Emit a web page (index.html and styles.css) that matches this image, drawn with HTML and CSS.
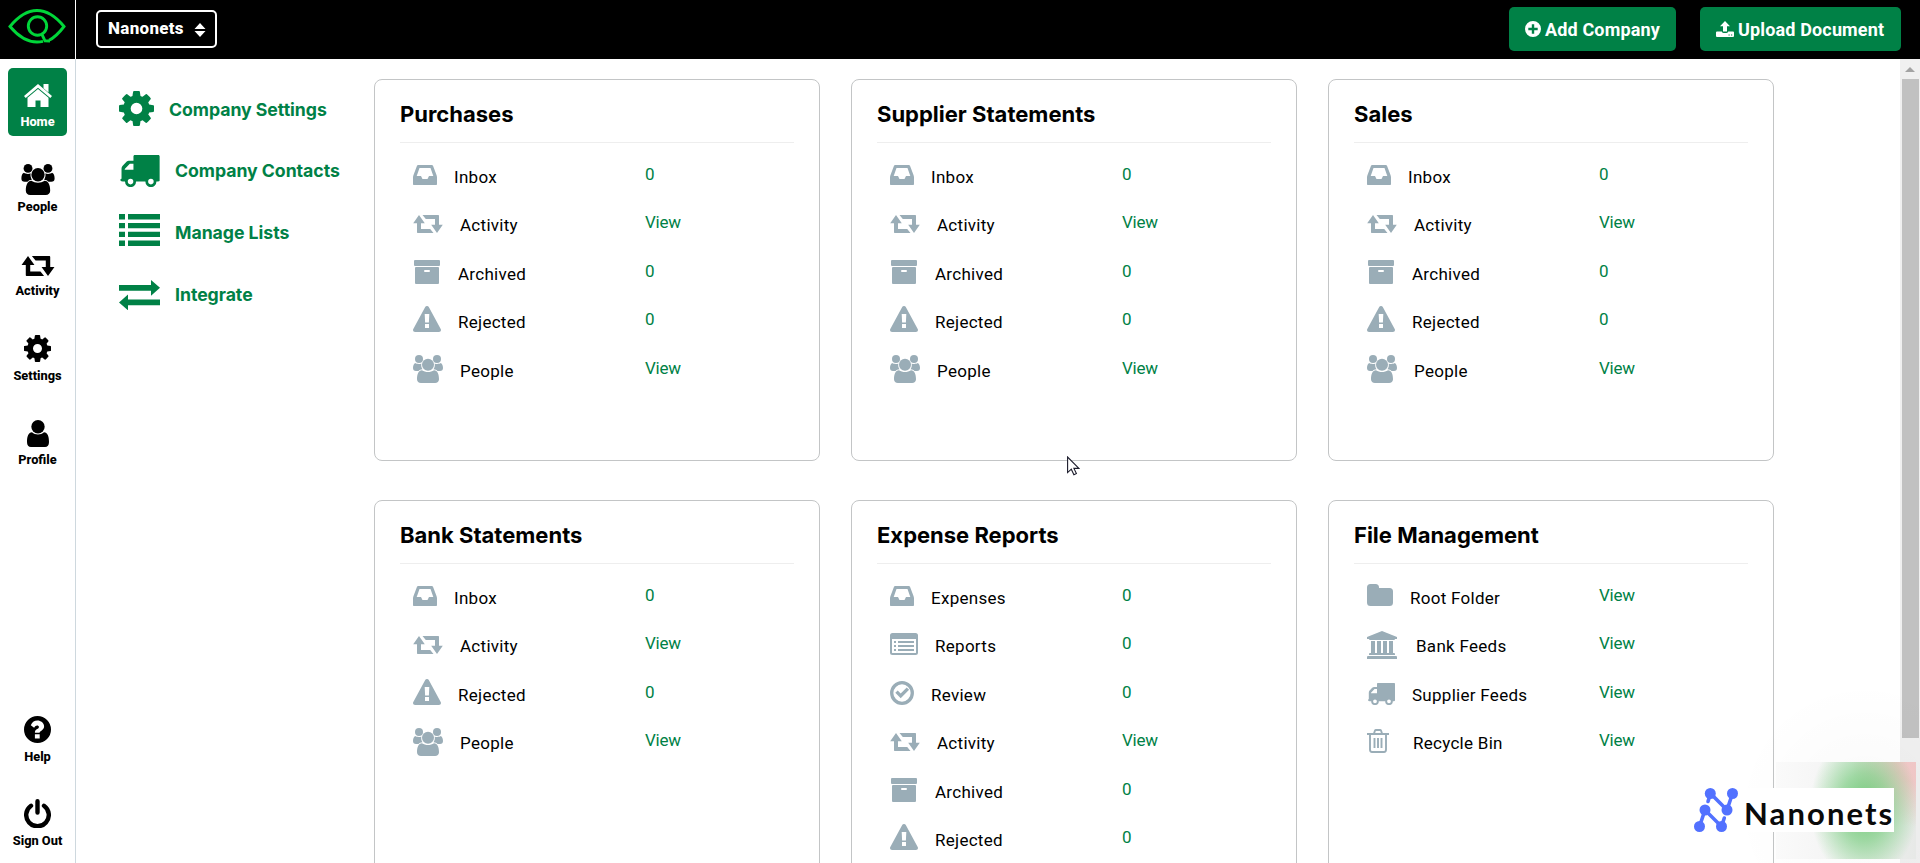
FILE: index.html
```html
<!DOCTYPE html>
<html lang="en">
<head>
<meta charset="utf-8">
<title>Nanonets</title>
<link rel="stylesheet" href="styles.css">
</head>
<body>
<svg class="defs" aria-hidden="true">
  <symbol id="home" viewBox="0 0 28 23"><path d="M14 0 28 12l-1.700 2.100L14 3.800 1.700 14.100 0 12zM19.500 0h5v8.500l-5-4.200zM14 5l10.500 8.800V23h-8v-6.500h-5V23h-8v-9.200z"/></symbol>
  <symbol id="people" viewBox="0 0 30 28"><circle cx="6" cy="4" r="4"/><circle cx="24" cy="4" r="4"/><circle cx="15" cy="9.700" r="6"/><path d="M2.300 8C3.500 9 7 9.300 8.300 8.400 8 11 8.400 12.500 9.500 14.300 7.500 14.500 6.500 15 5.500 16H3C1 16 0 15 0 13c0-2 .7-4.600 2.300-5zM27.700 8C26.500 9 23 9.300 21.700 8.400c.3 2.600-.1 4.100-1.200 5.900 2 .2 3 .7 4 1.700H27c2 0 3-1 3-3 0-2-.7-4.600-2.300-5zM9 15.200c3.500 2.400 8.500 2.400 12 0 3.500 0 5 4 5 9 0 2.300-1.600 3.800-4 3.800H8c-2.400 0-4-1.500-4-3.800 0-5 1.500-9 5-9z"/></symbol>
  <symbol id="activity" viewBox="0 0 30 18"><path d="M6 0l5.800 8.200H8V14h9.200l3.300 4H5c-.7 0-1-.4-1-1V8.200H.2zM24 18l-5.800-8.200H22V4h-9.200L9.500 0H25c.7 0 1 .4 1 1v8.800h3.800z"/></symbol>
  <symbol id="cog" viewBox="128 128 1536 1536"><path d="M1152 896q0-106-75-181t-181-75-181 75-75 181 75 181 181 75 181-75 75-181zm512-109v222q0 12-8 23t-20 13l-185 28q-19 54-39 91 35 50 107 138 10 12 10 25t-9 23q-27 37-99 108t-94 71q-12 0-26-9l-138-108q-44 23-91 38-16 136-29 186-7 28-36 28h-222q-14 0-24.500-8.500t-11.500-21.500l-28-184q-49-16-90-37l-141 107q-10 9-25 9-14 0-25-11-126-114-165-168-7-10-7-23 0-12 8-23 15-21 51-66.500t54-70.500q-27-50-41-99l-183-27q-13-2-21-12.500t-8-23.500v-222q0-12 8-23t19-13l186-28q14-46 39-92-40-57-107-138-10-12-10-24 0-10 9-23 26-36 98.500-107.500t94.500-71.500q13 0 26 10l138 107q44-23 91-38 16-136 29-186 7-28 36-28h222q14 0 24.500 8.500t11.500 21.500l28 184q49 16 90 37l142-107q9-9 24-9 13 0 25 10 129 119 165 170 7 8 7 22 0 12-8 23-15 21-51 66.500t-54 70.500q26 50 41 98l183 28q13 2 21 12.500t8 23.500z"/></symbol>
  <symbol id="user" viewBox="0 0 22 27"><circle cx="11" cy="6.700" r="6.700"/><path d="M5 12.300c3.300 3 8.700 3 12 0 3.500.2 5 4 5 9.700 0 3.300-1.500 5-4 5H4c-2.500 0-4-1.700-4-5 0-5.700 1.500-9.500 5-9.700z"/></symbol>
  <symbol id="help" viewBox="0 0 27 27"><path fill-rule="evenodd" d="M13.500 0a13.500 13.500 0 1 1 0 27 13.500 13.500 0 0 1 0-27zM6.800 9.200l3.300 2.500c1-1.400 1.900-2.200 3-2.200 1 0 1.800.6 1.800 1.400 0 1-.7 1.500-1.800 2.100-1.600.9-2.200 2-2.200 3.700h4.700c0-.8.6-1.200 1.800-2 1.600-1 2.700-2.300 2.700-4.400 0-3.400-3.300-5.800-6.700-5.800-3 0-5 1.400-6.600 4.700zM10.900 18.200v4.300h4.800v-4.300z"/></symbol>
  <symbol id="power" viewBox="0 0 27 29"><path d="M7 6.700A11.300 11.300 0 1 0 20 6.700M13.500 2.200V13.500" fill="none" stroke="currentColor" stroke-width="4.400" stroke-linecap="round"/></symbol>
  <symbol id="truck" viewBox="0 0 27 22"><path fill-rule="evenodd" d="M10 0h16c.6 0 1 .4 1 1v16.300c0 .7-.5 1-2.200 1a3.800 3.800 0 0 1-7.600 0h-6.400a3.800 3.800 0 0 1-7.600 0C.8 18.300 0 18 0 17c0-.4.3-.6.8-.7v-6.500c0-1 .2-1.800.8-2.400l2.600-2.700C4.700 4.200 5.500 4 6.200 4H9V1c0-.6.4-1 1-1zM9 6H6.500L3 9.700v.5h6zM7 16.400a1.900 1.900 0 1 0 0 3.800 1.900 1.900 0 0 0 0-3.800zm14 0a1.900 1.900 0 1 0 0 3.800 1.900 1.900 0 0 0 0-3.800z"/></symbol>
  <symbol id="list" viewBox="0 0 41 32"><path d="M0 0h6v5.500H0zm9 0h32v5.500H9zM0 9h6v5.300H0zm9 0h32v5.300H9zM0 17.700h6V23H0zm9 0h32V23H9zM0 26.500h6V32H0zm9 0h32V32H9z"/></symbol>
  <symbol id="swap" viewBox="0 0 41 30"><path d="M0 5h32V0l9 7.800-9 8V10.800H0zM41 25.300H9v5L0 22.500l9-8v5h32z"/></symbol>
  <symbol id="inbox" viewBox="0 0 24 20"><path fill-rule="evenodd" d="M5.200 0h13.600c.6 0 1 .3 1.200.8L23.500 10c.3.800.5 1.600.5 2.400V19c0 .6-.4 1-1 1H1c-.6 0-1-.4-1-1v-6.600c0-.8.200-1.600.5-2.400L4 .8c.2-.5.600-.8 1.200-.8zM6.500 3 3.700 11H8l1.500 3h5l1.500-3h4.300L17.500 3z"/></symbol>
  <symbol id="archive" viewBox="0 0 28 24"><path fill-rule="evenodd" d="M2 0h24q1 0 1 1v4q0 1-1 1H2q-1 0-1-1V1q0-1 1-1zM3 7h22q1 0 1 1v15q0 1-1 1H3q-1 0-1-1V8q0-1 1-1zM12 10q-1 0-1 1t1 1h4q1 0 1-1t-1-1z"/></symbol>
  <symbol id="warn" viewBox="0 0 28 26"><path fill-rule="evenodd" d="M14 0c.8 0 1.400.4 1.800 1.100L27.700 23c.8 1.400-.2 3-1.800 3H2.100C.5 26-.5 24.400.3 23L12.200 1.100C12.600.4 13.200 0 14 0zM11.700 8l.4 8.500h3.800l.4-8.500zM12 18v4h4v-4z"/></symbol>
  <symbol id="report" viewBox="0 0 28 22"><path fill-rule="evenodd" d="M2.500 0h23Q28 0 28 2.500v17q0 2.500-2.500 2.500h-23Q0 22 0 19.500v-17Q0 0 2.500 0zM2 6v13.500q0 .5.500.5h23q.5 0 .5-.5V6zM4 8h2v2H4zm4 0h16v2H8zM4 12h2v2H4zm4 0h16v2H8zM4 16h2v2H4zm4 0h16v2H8z"/></symbol>
  <symbol id="check" viewBox="0 0 24 24"><circle cx="12" cy="12" r="10.300" fill="none" stroke="currentColor" stroke-width="3.300"/><path d="M5.300 11.800 7.700 9.400l3 3 6-6 2.400 2.400L10.700 17.200z"/></symbol>
  <symbol id="folder" viewBox="0 0 26 22"><path d="M3.500 0h5Q12 0 12 3.500V4h10.500Q26 4 26 7.500v11q0 3.500-3.500 3.500h-19Q0 22 0 18.500v-15Q0 0 3.500 0z"/></symbol>
  <symbol id="bank" viewBox="0 0 30 28"><path d="M15 0l15 6v2h-2q0 1-1 1H3Q2 9 2 8H0V6zM4 10h4v12h2V10h4v12h2V10h4v12h2V10h4v12h1q1 0 1 1v1H2v-1q0-1 1-1h1zM1 25h28q1 0 1 1v2H0v-2q0-1 1-1z"/></symbol>
  <symbol id="trash" viewBox="0 0 22 24"><path d="M0 5h22M7 4.500 8 1.500Q8.200 1 9 1h4q.8 0 1 .5l1 3M3 5v15.500Q3 23 5 23h12q2 0 2-2.500V5M7.500 9v10M11 9v10M14.500 9v10" fill="none" stroke="currentColor" stroke-width="1.900"/></symbol>
  <symbol id="plus" viewBox="0 0 16 16"><path fill-rule="evenodd" d="M8 0a8 8 0 1 1 0 16A8 8 0 0 1 8 0zM6.800 3.300v3.500H3.300v2.400h3.500v3.500h2.400V9.200h3.500V6.800H9.200V3.300z"/></symbol>
  <symbol id="upload" viewBox="0 0 18 16"><path fill-rule="evenodd" d="M9 0l5 5.200h-3V10.500H7V5.200H4zM1 10.500h4.800q.5 1.500 2 1.500h2.400q1.500 0 2-1.500H17q1 0 1 1V15q0 1-1 1H1q-1 0-1-1v-3.500q0-1 1-1zM12.500 13.500v1h1.200v-1zm2.500 0v1h1.200v-1z"/></symbol>
</svg>

<header class="topbar">
  <div class="brand">
    <svg class="eye" viewBox="0 0 58 35"><path d="M41 31.200Q48 28 56 17.500 43 1.500 29 1.500T2 17.500Q15 33 29 33q3 0 6-.7"/><circle cx="29.500" cy="17" r="9.200"/><path d="M33.500 24.500 37 31.800l5 .2"/></svg>
  </div>
  <div class="company">Nanonets
    <svg width="12" height="14" viewBox="0 0 12 14"><path d="M6 0l5.500 6H.5zM.5 8h11L6 14z"/></svg>
  </div>
  <div class="actions">
    <div class="btn"><svg class="plus"><use href="#plus"/></svg><span>Add Company</span></div>
    <div class="btn"><svg class="upload"><use href="#upload"/></svg><span>Upload Document</span></div>
  </div>
</header>

<div class="shell">
  <nav class="rail">
    <div class="item on"><svg class="r-home"><use href="#home"/></svg><span>Home</span></div>
    <div class="item"><svg class="r-people"><use href="#people"/></svg><span>People</span></div>
    <div class="item"><svg class="r-act"><use href="#activity"/></svg><span>Activity</span></div>
    <div class="item"><svg class="r-cog"><use href="#cog"/></svg><span>Settings</span></div>
    <div class="item"><svg class="r-user"><use href="#user"/></svg><span>Profile</span></div>
    <div class="item push"><svg class="r-help"><use href="#help"/></svg><span>Help</span></div>
    <div class="item"><svg class="r-power"><use href="#power"/></svg><span>Sign Out</span></div>
  </nav>

  <main class="main">
    <aside class="links">
      <div class="link"><svg class="l-cog"><use href="#cog"/></svg><span>Company Settings</span></div>
      <div class="link"><svg class="l-truck"><use href="#truck"/></svg><span>Company Contacts</span></div>
      <div class="link"><svg class="l-list"><use href="#list"/></svg><span>Manage Lists</span></div>
      <div class="link"><svg class="l-swap"><use href="#swap"/></svg><span>Integrate</span></div>
    </aside>

    <div class="cards">
      <section class="card"><h2>Purchases</h2>
        <div class="row"><svg class="inbox"><use href="#inbox"/></svg><span>Inbox</span><b>0</b></div>
        <div class="row"><svg class="activity"><use href="#activity"/></svg><span>Activity</span><b>View</b></div>
        <div class="row"><svg class="archive"><use href="#archive"/></svg><span>Archived</span><b>0</b></div>
        <div class="row"><svg class="warn"><use href="#warn"/></svg><span>Rejected</span><b>0</b></div>
        <div class="row"><svg class="people"><use href="#people"/></svg><span>People</span><b>View</b></div>
      </section>
      <section class="card"><h2>Supplier Statements</h2>
        <div class="row"><svg class="inbox"><use href="#inbox"/></svg><span>Inbox</span><b>0</b></div>
        <div class="row"><svg class="activity"><use href="#activity"/></svg><span>Activity</span><b>View</b></div>
        <div class="row"><svg class="archive"><use href="#archive"/></svg><span>Archived</span><b>0</b></div>
        <div class="row"><svg class="warn"><use href="#warn"/></svg><span>Rejected</span><b>0</b></div>
        <div class="row"><svg class="people"><use href="#people"/></svg><span>People</span><b>View</b></div>
      </section>
      <section class="card"><h2>Sales</h2>
        <div class="row"><svg class="inbox"><use href="#inbox"/></svg><span>Inbox</span><b>0</b></div>
        <div class="row"><svg class="activity"><use href="#activity"/></svg><span>Activity</span><b>View</b></div>
        <div class="row"><svg class="archive"><use href="#archive"/></svg><span>Archived</span><b>0</b></div>
        <div class="row"><svg class="warn"><use href="#warn"/></svg><span>Rejected</span><b>0</b></div>
        <div class="row"><svg class="people"><use href="#people"/></svg><span>People</span><b>View</b></div>
      </section>
      <section class="card"><h2>Bank Statements</h2>
        <div class="row"><svg class="inbox"><use href="#inbox"/></svg><span>Inbox</span><b>0</b></div>
        <div class="row"><svg class="activity"><use href="#activity"/></svg><span>Activity</span><b>View</b></div>
        <div class="row"><svg class="warn"><use href="#warn"/></svg><span>Rejected</span><b>0</b></div>
        <div class="row"><svg class="people"><use href="#people"/></svg><span>People</span><b>View</b></div>
      </section>
      <section class="card"><h2>Expense Reports</h2>
        <div class="row"><svg class="inbox"><use href="#inbox"/></svg><span>Expenses</span><b>0</b></div>
        <div class="row"><svg class="report"><use href="#report"/></svg><span>Reports</span><b>0</b></div>
        <div class="row"><svg class="check"><use href="#check"/></svg><span>Review</span><b>0</b></div>
        <div class="row"><svg class="activity"><use href="#activity"/></svg><span>Activity</span><b>View</b></div>
        <div class="row"><svg class="archive"><use href="#archive"/></svg><span>Archived</span><b>0</b></div>
        <div class="row"><svg class="warn"><use href="#warn"/></svg><span>Rejected</span><b>0</b></div>
      </section>
      <section class="card"><h2>File Management</h2>
        <div class="row"><svg class="folder"><use href="#folder"/></svg><span>Root Folder</span><b>View</b></div>
        <div class="row"><svg class="bank"><use href="#bank"/></svg><span>Bank Feeds</span><b>View</b></div>
        <div class="row"><svg class="truck"><use href="#truck"/></svg><span>Supplier Feeds</span><b>View</b></div>
        <div class="row"><svg class="trash"><use href="#trash"/></svg><span>Recycle Bin</span><b>View</b></div>
      </section>
    </div>
  </main>

  <div class="scroll"><svg width="10" height="5" viewBox="0 0 10 5"><path d="M5 0l5 5H0z"/></svg><div class="thumb"></div></div>
</div>

<div class="halo"></div>
<div class="glow"></div>
<div class="watermark">
  <svg width="44" height="44" viewBox="0 0 44 44"><path fill="none" stroke="currentColor" stroke-width="3.600" stroke-linecap="round" d="M5.500 38.500 11 22l16.500 16.500 2.800-8.500M14 13.500l2.500-8L33 22l5.500-16.500"/><circle cx="16.300" cy="5.500" r="5.500"/><circle cx="38.500" cy="5.500" r="5.500"/><circle cx="11" cy="22" r="5.500"/><circle cx="33" cy="22" r="5.500"/><circle cx="5.500" cy="38.500" r="5.500"/><circle cx="27.500" cy="38.500" r="5.500"/></svg>
  <span>Nanonets</span>
</div>
<svg class="cursor" viewBox="0 0 13 20"><path d="M.6 1v15.600l3.700-3.400 2.600 5.600 2.500-1.200-2.500-5.200h5z" fill="#fff" stroke="#1b1b2b" stroke-width="1.100"/></svg>
</body>
</html>
```
FILE: styles.css
```css
* { box-sizing: border-box; }
body { margin: 0; height: 863px; overflow: hidden; background: #fff; font-family: Roboto, "Liberation Sans", sans-serif; color: #000; display: flex; flex-direction: column; }
svg { fill: currentColor; display: block; flex: none; }
.defs { position: absolute; width: 0; height: 0; }

.topbar { height: 59px; flex: none; background: #000; color: #fff; display: flex; align-items: flex-start; }
.brand { width: 76px; height: 59px; border-right: 1px solid #fff; padding: 9px 0 0 8px; }
.eye { width: 58px; height: 35px; fill: none; stroke: #00d639; stroke-width: 2.900px; }
.company { margin: 10px 0 0 20px; width: 121px; height: 38px; border: 2px solid #fff; border-radius: 5px; display: flex; align-items: center; justify-content: space-between; padding: 0 9px 3px 10px; font-weight: 800; font-size: 17px; letter-spacing: .3px; }
.company svg { margin-top: 4px; }
.actions { margin-left: auto; padding: 7px 19px 0 0; display: flex; gap: 24px; }
.btn { height: 44px; border-radius: 5px; background: #008146; display: flex; align-items: center; padding-left: 16px; font-weight: 700; font-size: 18px; letter-spacing: .15px; width: 201px; gap: 4px; }
.btn:first-child { width: 167px; }
.btn span { padding-top: 1px; white-space: nowrap; }
.plus { width: 16px; height: 16px; }
.upload { width: 18px; height: 16px; }

.shell { flex: 1; min-height: 0; display: flex; }
.rail { width: 76px; border-right: 1px solid #ced8de; padding: 9px 0 8px 8px; display: flex; flex-direction: column; gap: 16.500px; }
.item { width: 59px; height: 68px; flex: none; border-radius: 5px; display: flex; flex-direction: column; align-items: center; justify-content: flex-end; padding-bottom: 7px; font-weight: 800; font-size: 12.800px; line-height: 14px; white-space: nowrap; }
.item.on { background: #008146; color: #fff; }
.push { margin-top: auto; }
.r-home { width: 28px; height: 23px; margin-bottom: 8px; }
.r-people { width: 34px; height: 31px; margin-bottom: 5px; }
.r-act { width: 34px; height: 20px; margin-bottom: 8px; }
.r-cog { width: 27px; height: 27px; margin-bottom: 7px; }
.r-user { width: 22px; height: 27px; margin-bottom: 6px; }
.r-help { width: 27px; height: 27px; margin-bottom: 7px; }
.r-power { width: 27px; height: 29px; margin-bottom: 6px; }

.main { flex: 1; min-width: 0; display: flex; overflow: hidden; }
.links { width: 298px; padding: 20px 0 0 43px; flex: none; color: #008146; }
.link { height: 61.600px; display: flex; align-items: center; gap: 15px; font-family: Inter, Roboto, sans-serif; font-weight: 700; font-size: 17.700px; line-height: 22px; letter-spacing: -.05px; white-space: nowrap; }
.l-cog { width: 35px; height: 35px; margin-top: -3px; }
.l-truck { width: 40px; height: 32px; margin: 0 0 0 1px; }
.l-list { width: 41px; height: 32px; margin-top: -6px; }
.l-swap { width: 41px; height: 30px; }

.cards { padding-top: 20px; flex: none; display: grid; grid-template-columns: repeat(3, 446px); grid-template-rows: 382px 500px; column-gap: 31px; row-gap: 39px; align-content: start; }
.card { border: 1px solid #c3c5c6; border-radius: 8px; padding: 0 25px; }
.card h2 { margin: 0 0 9.300px; height: 63px; padding-top: 19px; border-bottom: 1px solid #eee; font-family: Inter, Roboto, sans-serif; font-size: 22px; line-height: 30px; font-weight: 700; letter-spacing: 0; white-space: nowrap; }
.row { height: 48.400px; padding-left: 13px; display: grid; grid-template-columns: auto 1fr 149px; column-gap: 17px; align-items: center; font-size: 17px; letter-spacing: .28px; line-height: 20px; }
.row svg { color: #9aadb7; }
.row span { padding-top: 1px; }
.row b { font-weight: 400; color: #008146; padding-bottom: 5px; letter-spacing: -.2px; }
.inbox { width: 24px; height: 20px; margin-top: -3px; }
.activity { width: 30px; height: 18px; margin-top: -1px; }
.archive { width: 28px; height: 24px; margin-top: -3px; }
.warn { width: 28px; height: 26px; margin-top: -5px; }
.people { width: 30px; height: 28px; margin-top: -2px; }
.report { width: 28px; height: 22px; margin-top: -3px; }
.check { width: 24px; height: 24px; margin-top: -3px; }
.folder { width: 26px; height: 22px; margin-top: -5px; }
.bank { width: 30px; height: 28px; margin: -2px 2px 0 0; }
.row .truck { width: 27px; height: 22px; margin: -1px 0 0 1px; }
.trash { width: 22px; height: 24px; margin: -4px 7px 0 0; }

.scroll { width: 20px; background: #f0f0f0; color: #a3a3a3; display: flex; flex-direction: column; align-items: center; padding-top: 8px; }
.thumb { width: 17px; height: 659px; margin: 7px 0 0 1px; background: #c1c1c1; }

/* translucent product badge in the lower right corner */
.halo { position: absolute; left: 1740px; top: 690px; width: 180px; height: 173px; background: radial-gradient(circle at 125px 120px, rgba(0,0,0,.025), transparent 130px); }
.glow { position: absolute; left: 1776px; top: 762px; width: 140px; height: 97px; background: radial-gradient(ellipse 54px 75px at 88px 45px, rgba(105,198,112,.95), rgba(115,203,122,.65) 45%, rgba(140,210,145,0)), radial-gradient(circle at 140px 0, rgba(240,195,195,.9) 20px, rgba(240,190,190,0) 65px), linear-gradient(90deg, #fafafa, #f3f3f3 50%, #e7e9e7); }
.watermark { position: absolute; left: 1694px; top: 788px; width: 200px; height: 44px; background: linear-gradient(90deg, transparent 50px, #fff 50px); color: #5271ff; display: flex; align-items: center; gap: 6px; overflow: hidden; }
.watermark span { font: 700 31px/44px Lato, sans-serif; letter-spacing: 2.100px; padding-top: 5px; color: #0a0a0a; }
.cursor { position: absolute; left: 1067px; top: 456px; width: 13px; height: 20px; }
```
